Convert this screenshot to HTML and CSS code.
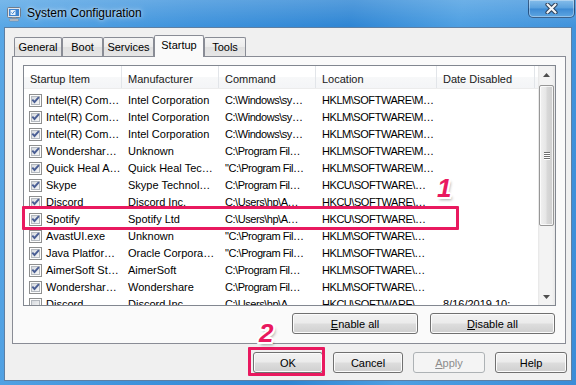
FILE: index.html
```html
<!DOCTYPE html>
<html>
<head>
<meta charset="utf-8">
<title>System Configuration</title>
<link rel="stylesheet" href="styles.css">
</head>
<body>
<svg class="defs" width="0" height="0" aria-hidden="true">
  <defs>
    <linearGradient id="cbg" x1="0" y1="0" x2="1" y2="1">
      <stop offset="0" stop-color="#d4d8dd"/>
      <stop offset="1" stop-color="#f8f8f8"/>
    </linearGradient>
    <symbol id="cb" viewBox="0 0 13 13">
      <rect x="0.5" y="0.5" width="12" height="12" fill="#fdfdfd" stroke="#8e8f8f"/>
      <rect x="2.5" y="2.5" width="8" height="8" fill="url(#cbg)" stroke="#b4b9bf"/>
    </symbol>
    <symbol id="cbc" viewBox="0 0 13 13">
      <rect x="0.5" y="0.5" width="12" height="12" fill="#fdfdfd" stroke="#8e8f8f"/>
      <rect x="2.5" y="2.5" width="8" height="8" fill="url(#cbg)" stroke="#b4b9bf"/>
      <polygon points="2.6,6.3 4,4.9 5.5,6.5 9.2,2.4 10.6,3.8 5.5,9.5" fill="#4a5e94"/>
    </symbol>
  </defs>
</svg>

<div class="window">
  <div class="titlebar">
    <svg class="app-icon" viewBox="0 0 16 16">
      <rect x="1.5" y="1.5" width="13" height="10" rx="1" fill="#dfe4ea" stroke="#6f7c8c"/>
      <rect x="3" y="3" width="10" height="7" fill="#3d83cf"/>
      <rect x="4.5" y="4" width="5" height="5" fill="#e8f1fb"/>
      <path d="M5.3 6.4 L6.6 7.7 L8.8 4.8" stroke="#3d83cf" stroke-width="1" fill="none"/>
      <rect x="6" y="11.5" width="4" height="1.5" fill="#8e99a6"/>
      <rect x="3.5" y="13" width="9" height="2" rx="0.5" fill="#c3cbd4" stroke="#7a8594" stroke-width="0.6"/>
    </svg>
    <span class="title">System Configuration</span>
    <div class="close">
      <svg width="13" height="11" viewBox="0 0 13 11">
        <path d="M2.5 1.5 L10.5 9.5 M10.5 1.5 L2.5 9.5" stroke="#2c3f58" stroke-width="4.2" stroke-linecap="round"/>
        <path d="M2.5 1.5 L10.5 9.5 M10.5 1.5 L2.5 9.5" stroke="#f4f6f8" stroke-width="2.2" stroke-linecap="round"/>
      </svg>
    </div>
  </div>

  <div class="client">
    <div class="tabs">
      <div class="tab t-general">General</div>
      <div class="tab t-boot">Boot</div>
      <div class="tab t-services">Services</div>
      <div class="tab t-startup active">Startup</div>
      <div class="tab t-tools">Tools</div>
    </div>

    <div class="panel">
      <div class="list">
        <div class="list-main">
          <div class="header">
            <div class="hcell w1">Startup Item</div>
            <div class="hcell w2">Manufacturer</div>
            <div class="hcell w3">Command</div>
            <div class="hcell w4">Location</div>
            <div class="hcell w5">Date Disabled</div>
          </div>
          <div class="rows">
            <div class="row"><div class="cell c1 w1"><svg class="cb"><use href="#cbc"/></svg><span>Intel(R) Com…</span></div><div class="cell w2">Intel Corporation</div><div class="cell w3 tight">C:\Windows\sy…</div><div class="cell w4 tight">HKLM\SOFTWARE\M…</div><div class="cell w5"></div></div>
            <div class="row"><div class="cell c1 w1"><svg class="cb"><use href="#cbc"/></svg><span>Intel(R) Com…</span></div><div class="cell w2">Intel Corporation</div><div class="cell w3 tight">C:\Windows\sy…</div><div class="cell w4 tight">HKLM\SOFTWARE\M…</div><div class="cell w5"></div></div>
            <div class="row"><div class="cell c1 w1"><svg class="cb"><use href="#cbc"/></svg><span>Intel(R) Com…</span></div><div class="cell w2">Intel Corporation</div><div class="cell w3 tight">C:\Windows\sy…</div><div class="cell w4 tight">HKLM\SOFTWARE\M…</div><div class="cell w5"></div></div>
            <div class="row"><div class="cell c1 w1"><svg class="cb"><use href="#cbc"/></svg><span>Wondershar…</span></div><div class="cell w2">Unknown</div><div class="cell w3 tight">C:\Program Fil…</div><div class="cell w4 tight">HKLM\SOFTWARE\M…</div><div class="cell w5"></div></div>
            <div class="row"><div class="cell c1 w1"><svg class="cb"><use href="#cbc"/></svg><span>Quick Heal A…</span></div><div class="cell w2">Quick Heal Tec…</div><div class="cell w3 tight">"C:\Program Fil…</div><div class="cell w4 tight">HKLM\SOFTWARE\M…</div><div class="cell w5"></div></div>
            <div class="row"><div class="cell c1 w1"><svg class="cb"><use href="#cbc"/></svg><span>Skype</span></div><div class="cell w2">Skype Technol…</div><div class="cell w3 tight">C:\Program Fil…</div><div class="cell w4 tight">HKCU\SOFTWARE\…</div><div class="cell w5"></div></div>
            <div class="row"><div class="cell c1 w1"><svg class="cb"><use href="#cbc"/></svg><span>Discord</span></div><div class="cell w2">Discord Inc.</div><div class="cell w3 tight">C:\Users\hp\A…</div><div class="cell w4 tight">HKCU\SOFTWARE\…</div><div class="cell w5"></div></div>
            <div class="row"><div class="cell c1 w1"><svg class="cb"><use href="#cbc"/></svg><span>Spotify</span></div><div class="cell w2">Spotify Ltd</div><div class="cell w3 tight">C:\Users\hp\A…</div><div class="cell w4 tight">HKCU\SOFTWARE\…</div><div class="cell w5"></div></div>
            <div class="row"><div class="cell c1 w1"><svg class="cb"><use href="#cbc"/></svg><span>AvastUI.exe</span></div><div class="cell w2">Unknown</div><div class="cell w3 tight">"C:\Program Fil…</div><div class="cell w4 tight">HKLM\SOFTWARE\…</div><div class="cell w5"></div></div>
            <div class="row"><div class="cell c1 w1"><svg class="cb"><use href="#cbc"/></svg><span>Java Platfor…</span></div><div class="cell w2">Oracle Corpora…</div><div class="cell w3 tight">"C:\Program Fil…</div><div class="cell w4 tight">HKLM\SOFTWARE\…</div><div class="cell w5"></div></div>
            <div class="row"><div class="cell c1 w1"><svg class="cb"><use href="#cbc"/></svg><span>AimerSoft St…</span></div><div class="cell w2">AimerSoft</div><div class="cell w3 tight">C:\Program Fil…</div><div class="cell w4 tight">HKLM\SOFTWARE\…</div><div class="cell w5"></div></div>
            <div class="row"><div class="cell c1 w1"><svg class="cb"><use href="#cbc"/></svg><span>Wondershar…</span></div><div class="cell w2">Wondershare</div><div class="cell w3 tight">C:\Program Fil…</div><div class="cell w4 tight">HKLM\SOFTWARE\…</div><div class="cell w5"></div></div>
            <div class="row"><div class="cell c1 w1"><svg class="cb"><use href="#cb"/></svg><span>Discord</span></div><div class="cell w2">Discord Inc.</div><div class="cell w3 tight">C:\Users\hp\A…</div><div class="cell w4 tight">HKCU\SOFTWARE\…</div><div class="cell w5">8/16/2019 10:…</div></div>
          </div>
        </div>
        <div class="scrollbar">
          <div class="sb-btn"><svg width="7" height="4" viewBox="0 0 7 4"><polygon points="0,4 3.5,0 7,4" fill="#4e4e4e"/></svg></div>
          <div class="sb-track">
            <div class="sb-thumb">
              <div class="grip"><i></i><i></i><i></i><i></i></div>
            </div>
          </div>
          <div class="sb-btn"><svg width="7" height="4" viewBox="0 0 7 4"><polygon points="0,0 7,0 3.5,4" fill="#4e4e4e"/></svg></div>
        </div>
      </div>
      <div class="panel-buttons">
        <button class="btn b-enable"><u>E</u>nable all</button>
        <button class="btn b-disable"><u>D</u>isable all</button>
      </div>
    </div>

    <div class="dialog-buttons">
      <button class="btn b-ok">OK</button>
      <button class="btn b-cancel">Cancel</button>
      <button class="btn b-apply" disabled><u>A</u>pply</button>
      <button class="btn b-help">Help</button>
    </div>
  </div>

  <div class="mark mark-row"></div>
  <div class="mark mark-ok"></div>
  <div class="step step-1">1</div>
  <div class="step step-2">2</div>
</div>
</body>
</html>
```

FILE: styles.css
```css
* { box-sizing: border-box; }

html, body {
  margin: 0;
  padding: 0;
}

body {
  width: 576px;
  height: 385px;
  overflow: hidden;
  font-family: "Liberation Sans", Arial, sans-serif;
  font-size: 11px;
  color: #000;
}

.defs {
  position: absolute;
  width: 0;
  height: 0;
  overflow: hidden;
}

.window {
  position: relative;
  width: 576px;
  height: 385px;
  display: flex;
  flex-direction: column;
  background:
    linear-gradient(180deg, rgba(255,255,255,0.18) 0px, rgba(255,255,255,0) 26px),
    linear-gradient(100deg, #5aa8e6 0%, #3f93dc 30%, #2f86d4 55%, #4d9fe2 72%, #3a8cd8 100%);
}

/* ---------- title bar ---------- */
.titlebar {
  height: 27px;
  display: flex;
  align-items: flex-start;
  padding-left: 6px;
  padding-right: 1px;
}

.app-icon {
  width: 16px;
  height: 16px;
  margin-top: 6px;
}

.title {
  margin-left: 5px;
  margin-top: 6px;
  font-size: 12px;
  line-height: 15px;
  color: #000;
  text-shadow: 0 0 6px rgba(255,255,255,0.7), 0 0 3px rgba(255,255,255,0.5);
}

.close {
  margin-left: auto;
  width: 47px;
  height: 18px;
  border: 1px solid rgba(22, 48, 86, 0.65);
  border-top: none;
  border-radius: 0 0 5px 5px;
  background: linear-gradient(180deg, #86bdea 0%, #5aa1de 48%, #3d8ad3 52%, #5ea6e2 100%);
  box-shadow: inset 0 0 0 1px rgba(255,255,255,0.35);
  display: flex;
  align-items: center;
  justify-content: center;
}

/* ---------- client ---------- */
.client {
  flex: 1;
  margin: 0 4px 4px 4px;
  border: 1px solid #5d7fa3;
  background: #f0f0f0;
  padding: 7px 4px 0 7px;
  display: flex;
  flex-direction: column;
}

.tabs {
  display: flex;
  height: 21px;
  padding-left: 2px;
}

.tab {
  margin-top: 2px;
  height: 19px;
  border: 1px solid #898c95;
  border-bottom: none;
  border-radius: 2px 2px 0 0;
  background: linear-gradient(180deg, #f4f4f4 0%, #ececec 50%, #e0e0e0 51%, #e6e6e6 100%);
  text-align: center;
  line-height: 18px;
  color: #000;
}

.t-general { width: 48px; }
.t-boot { width: 41px; }
.t-services { width: 51px; }
.t-startup { width: 50px; }
.t-tools { width: 42px; }

.tab.active {
  position: relative;
  z-index: 1;
  margin-top: 0;
  height: 22px;
  background: #fafafa;
  line-height: 19px;
}

.panel {
  width: 554px;
  height: 288px;
  border: 1px solid #898c95;
  background: #fafafa;
  padding: 8px 9px 9px 10px;
  display: flex;
  flex-direction: column;
}

/* ---------- list view ---------- */
.list {
  height: 241px;
  border: 1px solid #828790;
  background: #fff;
  display: flex;
}

.list-main {
  flex: 1;
  overflow: hidden;
  display: flex;
  flex-direction: column;
}

.header {
  display: flex;
  height: 23px;
  flex: none;
  border-bottom: 1px solid #ececec;
  background: linear-gradient(180deg, #ffffff 0%, #ffffff 50%, #f7f8f9 51%, #f4f5f7 100%);
}

.hcell {
  border-right: 1px solid #e2e5e9;
  padding: 4px 0 0 6px;
  line-height: 18px;
  color: #1a1a1a;
  white-space: nowrap;
  overflow: hidden;
}

.w1 { width: 98px; flex: none; }
.w2 { width: 97px; flex: none; }
.w3 { width: 97px; flex: none; }
.w4 { width: 121px; flex: none; }
.w5 { width: 98px; flex: none; }

.rows {
  padding-top: 3px;
}

.row {
  display: flex;
  height: 17px;
  line-height: 17px;
  white-space: nowrap;
}

.cell {
  padding-left: 6px;
  overflow: hidden;
}

.cell.tight {
  letter-spacing: -0.45px;
}

.cell.c1 {
  padding-left: 5px;
  display: flex;
  align-items: center;
  gap: 4px;
}

.cb {
  width: 13px;
  height: 13px;
  flex: none;
}

/* ---------- scrollbar ---------- */
.scrollbar {
  width: 17px;
  flex: none;
  display: flex;
  flex-direction: column;
  background: linear-gradient(90deg, #e6e6e6 0px, #f3f3f3 2px, #f3f3f3 14px, #e8e8e8 17px);
}

.sb-btn {
  height: 17px;
  flex: none;
  display: flex;
  align-items: center;
  justify-content: center;
}

.sb-track {
  flex: 1;
}

.sb-thumb {
  margin: 2px 1px 0 1px;
  height: 141px;
  border: 1px solid #979797;
  border-radius: 2px;
  background: linear-gradient(90deg, #f1f1f1 0%, #e6e6e6 45%, #d8d8d8 55%, #cecece 100%);
  box-shadow: inset 0 0 0 1px rgba(255,255,255,0.75);
  display: flex;
  align-items: center;
  justify-content: center;
}

.grip {
  display: flex;
  flex-direction: column;
  gap: 1px;
}

.grip i {
  display: block;
  width: 6px;
  height: 1px;
  background: #6e6e6e;
  box-shadow: 0 1px 0 #fff;
}

/* ---------- buttons ---------- */
.panel-buttons {
  display: flex;
  justify-content: flex-end;
  gap: 12px;
  margin-top: 7px;
  padding-right: 1px;
}

.dialog-buttons {
  display: flex;
  justify-content: flex-end;
  gap: 10px;
  margin-top: 8px;
}

.btn {
  height: 21px;
  padding: 0;
  border: 1px solid #707070;
  border-radius: 3px;
  background: linear-gradient(180deg, #f2f2f2 0%, #ebebeb 48%, #dddddd 52%, #cfcfcf 100%);
  box-shadow: inset 0 0 0 1px #fbfbfb;
  font-family: "Liberation Sans", Arial, sans-serif;
  font-size: 11px;
  line-height: 18px;
  color: #000;
  text-align: center;
}

.btn u { text-decoration: underline; text-underline-offset: 1px; }

.b-enable { width: 126px; }
.b-disable { width: 125px; }
.b-ok { width: 70px; }
.b-cancel { width: 70px; }
.b-apply { width: 72px; }
.b-help { width: 72px; }

.btn:disabled {
  border-color: #adb2b5;
  background: #f4f4f4;
  box-shadow: none;
  color: #8d8d8d;
}

/* ---------- annotations (overlay) ---------- */
.mark {
  position: absolute;
  border: 3px solid #e9195f;
  border-radius: 1px;
}

.mark-row {
  left: 22px;
  top: 206px;
  width: 437px;
  height: 24px;
}

.mark-ok {
  left: 248px;
  top: 347px;
  width: 77px;
  height: 29px;
}

.step {
  position: absolute;
  font-family: "Liberation Sans", Arial, sans-serif;
  font-weight: bold;
  font-style: italic;
  font-size: 26px;
  line-height: 26px;
  color: #e9195f;
  text-shadow:
    2px 0 0 #fff, -2px 0 0 #fff, 0 2px 0 #fff, 0 -2px 0 #fff,
    1.5px 1.5px 0 #fff, -1.5px 1.5px 0 #fff, 1.5px -1.5px 0 #fff, -1.5px -1.5px 0 #fff,
    2px 3px 3px rgba(0,0,0,0.35);
}

.step-1 { left: 437px; top: 175px; }
.step-2 { left: 259px; top: 320px; }
```
